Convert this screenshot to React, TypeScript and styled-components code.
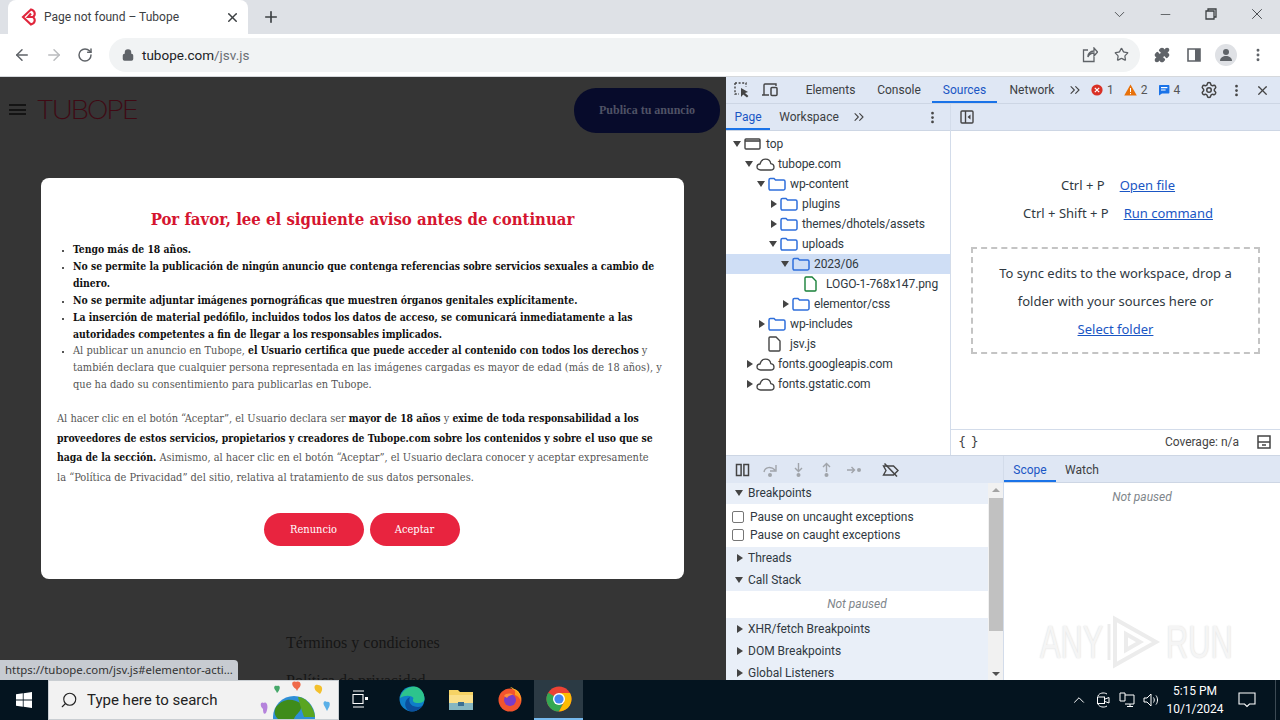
import React from "react";
import styled, { createGlobalStyle } from "styled-components";
import { ArrowLeft, ArrowRight, RotateCw, Lock, Star, Puzzle, X, Plus, ChevronDown, Minus, Settings, MoreVertical, ChevronsRight, ChevronUp, Search } from "lucide-react";

const Global = createGlobalStyle`
  html, body { margin: 0; padding: 0; width: 1280px; height: 720px; overflow: hidden; }
  body { font-family: Roboto, "Noto Sans", "Liberation Sans", sans-serif; }
  * { box-sizing: border-box; }
`;

const Screen = styled.div`
  width: 1280px;
  height: 720px;
  display: flex;
  flex-direction: column;
  overflow: hidden;
  background: #fff;
`;

/* browser chrome */
const TabStrip = styled.div`
  height: 34px;
  flex: none;
  background: #dee1e6;
  display: flex;
  align-items: center;
  padding-left: 8px;
  color: #3c4043;
`;
const Tab = styled.div`
  width: 240px;
  height: 34px;
  background: #fff;
  border-radius: 8px 8px 0 0;
  display: flex;
  align-items: center;
  padding: 0 8px 0 13px;
  font-size: 12px;
`;
const TabTitle = styled.span`
  flex: 1;
  margin-left: 7px;
  color: #3c4043;
`;
const NewTab = styled.div`
  margin-left: 14px;
  display: flex;
  color: #3c4043;
`;
const WindowButtons = styled.div`
  margin-left: auto;
  display: flex;
  align-items: center;
  padding-bottom: 6px;
  color: #3c4043;
`;
const WindowButton = styled.div`
  width: 46px;
  display: flex;
  justify-content: center;
`;
const Toolbar = styled.div`
  height: 43px;
  flex: none;
  background: #fff;
  border-bottom: 1px solid #d5d8dc;
  display: flex;
  align-items: center;
  padding: 0 0 0 13px;
  color: #5f6368;
`;
const NavIcons = styled.div`
  display: flex;
  align-items: center;
  gap: 14px;
  width: 96px;
  color: #5f6368;
`;
const Omnibox = styled.div`
  width: 1031px;
  height: 34px;
  margin-bottom: 1px;
  border-radius: 17px;
  background: #f1f3f4;
  display: flex;
  align-items: center;
  padding: 0 11px 0 13px;
  font-size: 13.5px;
`;
const Host = styled.span`
  color: #202124;
  margin-left: 8px;
`;
const UrlPath = styled.span`
  color: #6b6f74;
`;
const OmniRight = styled.div`
  margin-left: auto;
  display: flex;
  gap: 16px;
  align-items: center;
  color: #5f6368;
`;
const ToolbarRight = styled.div`
  display: flex;
  align-items: center;
  margin-left: 6px;
  color: #5f6368;
`;
const ToolSlot = styled.div`
  width: 32px;
  display: flex;
  align-items: center;
  justify-content: center;
`;
const Avatar = styled.div`
  width: 22px;
  height: 22px;
  border-radius: 50%;
  background: #dfe1e5;
  display: flex;
  align-items: center;
  justify-content: center;
`;

const Main = styled.div`
  flex: 1;
  display: flex;
  min-height: 0;
`;

/* page under the modal */
const Page = styled.div`
  position: relative;
  width: 726px;
  flex: none;
  background: #353535;
  overflow: hidden;
`;
const PageHeader = styled.div`
  display: flex;
  align-items: center;
  height: 65px;
  padding: 0 6px 0 9px;
`;
const Burger = styled.div`
  width: 17px;
  height: 11px;
  border-top: 2px solid #141414;
  border-bottom: 2px solid #141414;
  position: relative;
  &::after {
    content: "";
    display: block;
    height: 2px;
    margin-top: 2.5px;
    background: #141414;
  }
`;
const Logo = styled.div`
  margin-left: 10px;
  font-family: "Inter", sans-serif;
  font-weight: 200;
  font-size: 26px;
  letter-spacing: -2.2px;
  color: #3f0a14;
  transform: scaleX(1.12);
  transform-origin: left;
`;
const PublishButton = styled.div`
  margin-left: auto;
  margin-top: 1px;
  width: 146px;
  height: 45px;
  border-radius: 22px;
  background: #070b2b;
  color: #4f5265;
  font-family: "Liberation Serif", serif;
  font-weight: 700;
  font-size: 12px;
  display: flex;
  align-items: center;
  justify-content: center;
`;
const FooterLinks = styled.div`
  margin: 492px 0 0 286px;
  display: flex;
  flex-direction: column;
  gap: 20px;
  font-family: "Liberation Serif", serif;
  font-size: 16px;
  color: #161616;
`;
const Backdrop = styled.div`
  position: absolute;
  inset: 0;
  display: flex;
  align-items: center;
  justify-content: center;
`;
const Modal = styled.div`
  width: 643px;
  height: 401px;
  margin-right: 1px;
  background: #fff;
  border-radius: 8px;
  padding: 31px 16px 0 16px;
  font-family: "DejaVu Serif Condensed", "DejaVu Serif", "Liberation Serif", serif;
  font-size: 10.95px;
  color: #555;
  white-space: nowrap;
`;
const ModalTitle = styled.h2`
  margin: 0;
  text-align: center;
  font-size: 16.6px;
  line-height: 21px;
  font-weight: 700;
  color: #d5152f;
`;
const Rules = styled.ul`
  margin: 12px 0 0;
  padding: 0 0 0 16px;
  line-height: 16.9px;
  list-style: square;
  & li::marker { font-size: 7px; }
`;
const Note = styled.p`
  margin: 15px 0 0;
  line-height: 19.6px;
`;
const Strong = styled.b`
  color: #111;
  font-size: 10.35px;
  line-height: 1;
`;
const ModalActions = styled.div`
  display: flex;
  justify-content: center;
  gap: 6px;
  margin: 25px 0 0 -2px;
`;
const ModalButton = styled.div<{ $w: number }>`
  width: ${(p) => p.$w}px;
  height: 33px;
  border-radius: 17px;
  background: #e8243f;
  color: #fff;
  display: flex;
  align-items: center;
  justify-content: center;
  font-size: 11px;
`;
const StatusBubble = styled.div`
  position: absolute;
  left: 0;
  bottom: 0;
  width: 238px;
  height: 20px;
  background: #c7cbd1;
  border-radius: 0 4px 0 0;
  color: #333;
  font-family: "Noto Sans", sans-serif;
  font-size: 11.4px;
  line-height: 20px;
  padding-left: 5px;
  white-space: nowrap;
  overflow: hidden;
`;

/* devtools */
const DevTools = styled.div`
  position: relative;
  flex: 1;
  display: flex;
  flex-direction: column;
  min-width: 0;
  background: #fff;
  font-size: 12px;
  color: #303942;
`;
const Bar = styled.div`
  flex: none;
  height: 27px;
  background: #dfe7f4;
  display: flex;
  align-items: center;
  border-bottom: 1px solid #cdd6e4;
`;
const BarIcons = styled.div<{ $w?: number; $pad?: number }>`
  display: flex;
  align-items: center;
  gap: 10px;
  padding-left: ${(p) => p.$pad ?? 7}px;
  width: ${(p) => p.$w ?? 69}px;
  color: #444;
`;
const PanelTab = styled.div<{ $active?: boolean; $w: number }>`
  width: ${(p) => p.$w}px;
  height: 26px;
  padding-top: 1px;
  display: flex;
  align-items: center;
  justify-content: center;
  color: ${(p) => (p.$active ? "#1a56c4" : "#3c4043")};
  border-bottom: 2px solid ${(p) => (p.$active ? "#1a73e8" : "transparent")};
`;
const ScopeTab = styled(PanelTab)`
  padding-top: 3px;
`;
const MoreTabs = styled.div<{ $gap?: number }>`
  display: flex;
  margin-left: ${(p) => p.$gap ?? 0}px;
  color: #444;
`;
const Counts = styled.div`
  display: flex;
  align-items: center;
  gap: 4px;
  margin-left: 8px;
  color: #555;
`;
const CountGap = styled.span`
  margin-right: 6px;
`;
const BarRight = styled.div`
  margin-left: auto;
  display: flex;
  align-items: center;
  gap: 11px;
  padding-right: 10px;
  color: #444;
`;
const Upper = styled.div`
  flex: none;
  height: 352px;
  display: flex;
  border-bottom: 1px solid #cdd6e4;
`;
const Navigator = styled.div`
  width: 225px;
  flex: none;
  border-right: 1px solid #d3dcea;
  display: flex;
  flex-direction: column;
`;
const Tree = styled.div`
  padding-top: 3px;
  letter-spacing: -0.1px;
`;
const TreeRow = styled.div<{ $depth: number; $selected?: boolean }>`
  height: 20px;
  display: flex;
  align-items: center;
  padding-left: ${(p) => 7 + p.$depth * 12}px;
  background: ${(p) => (p.$selected ? "#cfdef5" : "transparent")};
  white-space: nowrap;
`;
const Caret = styled.span<{ $open?: boolean; $hidden?: boolean }>`
  width: 11px;
  flex: none;
  display: flex;
  visibility: ${(p) => (p.$hidden ? "hidden" : "visible")};
  &::before {
    content: "";
    display: block;
    ${(p) =>
      p.$open
        ? "border-left: 4.5px solid transparent; border-right: 4.5px solid transparent; border-top: 6px solid #444;"
        : "margin-left: 2px; border-top: 4.5px solid transparent; border-bottom: 4.5px solid transparent; border-left: 6px solid #444;"}
  }
`;
const RowIcon = styled.span`
  width: 22px;
  flex: none;
  display: flex;
`;
const Editor = styled.div`
  flex: 1;
  display: flex;
  flex-direction: column;
  min-width: 0;
`;
const EditorBody = styled.div`
  flex: 1;
  display: flex;
  flex-direction: column;
  padding: 40px 20px 0;
  font-family: "Noto Sans", sans-serif;
  font-size: 13px;
`;
const Shortcut = styled.div`
  display: flex;
  justify-content: center;
  gap: 15px;
  height: 28px;
  padding-left: 5px;
  align-items: center;
`;
const LinkText = styled.span`
  color: #1a56c4;
  text-decoration: underline;
`;
const DropZone = styled.div`
  margin-top: 20px;
  width: 289px;
  height: 107px;
  border: 2px dashed #c4c4c4;
  text-align: center;
  line-height: 28px;
  padding-top: 10px;
  display: flex;
  flex-direction: column;
`;
const CoverageBar = styled.div`
  height: 26px;
  flex: none;
  border-top: 1px solid #d3dcea;
  display: flex;
  align-items: center;
  justify-content: space-between;
  padding: 0 9px 2px 7px;
  font-size: 12px;
  color: #444;
`;
const FormatGlyph = styled.span`
  font-family: "DejaVu Sans", sans-serif;
  font-size: 13px;
`;
const CoverageRight = styled.div`
  display: flex;
  align-items: center;
  gap: 18px;
`;
const Lower = styled.div`
  flex: 1;
  display: flex;
  min-height: 0;
`;
const Debugger = styled.div`
  width: 278px;
  flex: none;
  display: flex;
  flex-direction: column;
  min-height: 0;
  border-right: 1px solid #d3dcea;
`;
const DebugBar = styled.div`
  height: 27px;
  flex: none;
  background: #dfe7f4;
  display: flex;
  align-items: center;
  padding-left: 8px;
  gap: 11px;
`;
const DebugSpacer = styled.span`
  width: 0;
  margin-left: -3px;
`;
const DebugBody = styled.div`
  flex: 1;
  display: flex;
  min-height: 0;
`;
const Sections = styled.div`
  flex: 1;
  min-width: 0;
  overflow: hidden;
`;
const SectionHead = styled.div`
  height: 22px;
  background: #e9eff8;
  display: flex;
  align-items: center;
  padding-left: 9px;
  gap: 2px;
  &:first-child { margin-top: -1px; }
`;
const CheckRow = styled.label`
  height: 18px;
  display: flex;
  align-items: center;
  padding-left: 6px;
  gap: 6px;
`;
const CheckBox = styled.span`
  width: 12px;
  height: 12px;
  border: 1px solid #767676;
  border-radius: 2px;
  background: #fff;
`;
const CheckList = styled.div`
  padding-top: 4px;
  height: 43px;
`;
const NotPaused = styled.div`
  height: 27px;
  padding-bottom: 2px;
  display: flex;
  align-items: center;
  justify-content: center;
  font-style: italic;
  color: #80868b;
`;
const ScrollTrack = styled.div`
  width: 15px;
  flex: none;
  background: #f1f1f1;
  display: flex;
  flex-direction: column;
  align-items: center;
  justify-content: space-between;
  padding: 5px 0 4px;
`;
const ScrollThumb = styled.div`
  width: 14px;
  height: 133px;
  margin-top: 6px;
  margin-bottom: auto;
  background: #c1c1c1;
`;
const ScrollUp = styled.span`
  border-left: 4px solid transparent;
  border-right: 4px solid transparent;
  border-bottom: 4px solid #a3a3a3;
`;
const ScrollDown = styled.span`
  border-left: 4px solid transparent;
  border-right: 4px solid transparent;
  border-top: 4px solid #505050;
`;
const ScopePane = styled.div`
  flex: 1;
  min-width: 0;
  display: flex;
  flex-direction: column;
`;
const ScopeText = styled.div`
  text-align: center;
  font-style: italic;
  color: #80868b;
  padding-top: 7px;
`;
const Watermark = styled.div`
  position: absolute;
  right: 52px;
  bottom: 8px;
  display: flex;
  align-items: center;
  gap: 4px;
  pointer-events: none;
`;
const WatermarkWord = styled.span`
  display: inline-block;
  width: 62px;
  font-family: "Liberation Sans", sans-serif;
  font-size: 46px;
  color: #f5f5f5;
  text-shadow: 0 0 2px #d8d8d8;
  white-space: nowrap;
  transform: scaleX(0.67);
  transform-origin: left;
`;

/* taskbar */
const Taskbar = styled.div`
  height: 40px;
  flex: none;
  background: #04141f;
  display: flex;
  align-items: center;
  color: #fff;
`;
const StartButton = styled.div`
  width: 48px;
  display: flex;
  justify-content: center;
`;
const SearchBox = styled.div`
  width: 291px;
  height: 40px;
  background: #f2f2f2;
  border: 1px solid #c9ced2;
  display: flex;
  align-items: center;
  padding-left: 11px;
  gap: 9px;
  color: #222;
  font-size: 15px;
`;
const SearchGlass = styled.span`
  display: flex;
  transform: scaleX(-1);
`;
const SearchArt = styled.span`
  margin-left: auto;
  display: flex;
  height: 38px;
`;
const TaskIcon = styled.div<{ $active?: boolean; $w?: number }>`
  width: ${(p) => p.$w ?? 49}px;
  height: 40px;
  display: flex;
  align-items: center;
  justify-content: center;
  background: ${(p) => (p.$active ? "#2b3a44" : "transparent")};
  border-bottom: 2px solid ${(p) => (p.$active ? "#76b9ed" : "transparent")};
`;
const TaskGroup = styled.div`
  display: flex;
  margin-left: 6px;
`;
const Tray = styled.div`
  margin-left: auto;
  display: flex;
  align-items: center;
  height: 40px;
`;
const TraySlot = styled.div<{ $w?: number }>`
  width: ${(p) => p.$w ?? 24}px;
  display: flex;
  justify-content: center;
`;
const Clock = styled.div`
  width: 64px;
  text-align: center;
  font-size: 12px;
  line-height: 18px;
  white-space: nowrap;
`;
const DesktopEdge = styled.div`
  width: 1px;
  height: 40px;
  margin: 0 4px 0 8px;
  background: #3c4a54;
`;

const sw = { fill: "none", stroke: "currentColor", strokeWidth: 1.3 };

function Favicon() {
  return (
    <svg width="16" height="18" viewBox="0 0 16 18">
      <path d="M10 1.5 L2 9 L10 16.5 C14 15.5 15 11.5 12 9 C15 6.5 14 2.5 10 1.5 Z M10 5.5 L7 9 L12 9" fill="none" stroke="#e0263c" strokeWidth="2.1" />
    </svg>
  );
}
function FolderIcon({ light }: { light?: boolean }) {
  return (
    <svg width="18" height="14" viewBox="0 0 18 14">
      <path d="M1 3 C1 2 1.6 1.5 2.4 1.5 H6 L7.5 3 H15.6 C16.4 3 17 3.6 17 4.4 V11.6 C17 12.4 16.4 13 15.6 13 H2.4 C1.6 13 1 12.4 1 11.6 Z" fill={light ? "#cfdef5" : "#fff"} stroke="#2f6fdb" strokeWidth="1.5" />
    </svg>
  );
}
function CloudIcon() {
  return (
    <svg width="19" height="13" viewBox="0 0 19 13">
      <path d="M4.6 12 C2.4 12 1 10.6 1 8.9 C1 7.2 2.4 6 4 6 C4.6 3.2 6.8 1.2 9.6 1.2 C12.4 1.2 14.4 3.2 14.8 5.6 C16.6 5.8 18 7 18 8.9 C18 10.6 16.6 12 14.6 12 Z" {...sw} stroke="#444" />
    </svg>
  );
}
function FileIcon({ color = "#444" }: { color?: string }) {
  return (
    <svg width="13" height="16" viewBox="0 0 13 16">
      <path d="M2 1 H8 L12 5 V14 C12 14.6 11.6 15 11 15 H2 C1.4 15 1 14.6 1 14 V2 C1 1.4 1.4 1 2 1 Z" fill="#fff" stroke={color} strokeWidth="1.4" />
    </svg>
  );
}
function FrameIcon() {
  return (
    <svg width="17" height="12" viewBox="0 0 17 12">
      <rect x="1" y="1" width="15" height="10" rx="1" fill="none" stroke="#444" strokeWidth="1.4" />
      <path d="M1 3 H16" stroke="#444" strokeWidth="1.6" />
    </svg>
  );
}
function InspectIcon() {
  return (
    <svg width="18" height="18" viewBox="0 0 18 18">
      <path d="M2 2 H13 V6 M2 2 V13 H6" fill="none" stroke="#444" strokeWidth="1.4" strokeDasharray="2 1.6" />
      <path d="M8 7 L8 16 L10.2 13.6 L14 16.6 L15.4 15 L12 12 L15 11 Z" fill="#444" />
    </svg>
  );
}
function DeviceIcon() {
  return (
    <svg width="18" height="14" viewBox="0 0 18 14">
      <path d="M1 12 H8 M3 12 V2 C3 1.4 3.4 1 4 1 H15 V3" fill="none" stroke="#444" strokeWidth="1.4" />
      <rect x="10" y="4.5" width="6" height="8" rx="1" fill="none" stroke="#444" strokeWidth="1.5" />
    </svg>
  );
}
function SidebarToggle() {
  return (
    <svg width="14" height="14" viewBox="0 0 14 14">
      <rect x="1" y="1" width="12" height="12" rx="1" fill="none" stroke="#444" strokeWidth="1.4" />
      <path d="M5.5 1 V13" stroke="#444" strokeWidth="1.4" />
      <path d="M10.5 4.5 L7.5 7 L10.5 9.5 Z" fill="#444" />
    </svg>
  );
}
function ErrorBadge() {
  return (
    <svg width="12" height="12" viewBox="0 0 12 12">
      <circle cx="6" cy="6" r="5.6" fill="#d93025" />
      <path d="M3.8 3.8 L8.2 8.2 M8.2 3.8 L3.8 8.2" stroke="#fff" strokeWidth="1.2" />
    </svg>
  );
}
function WarnBadge() {
  return (
    <svg width="13" height="12" viewBox="0 0 13 12">
      <path d="M6.5 0.5 L12.8 11.5 H0.2 Z" fill="#e8710a" />
      <path d="M6.5 4 V8 M6.5 9 V10.2" stroke="#fff" strokeWidth="1" />
    </svg>
  );
}
function InfoBadge() {
  return (
    <svg width="12" height="12" viewBox="0 0 12 12">
      <path d="M1 2 C1 1.4 1.4 1 2 1 H10.5 C11 1 11.4 1.4 11.4 2 V8.6 C11.4 9.2 11 9.6 10.5 9.6 H4 L1 11.4 Z" fill="#1a73e8" />
      <path d="M3 3.6 H9.4 M3 6 H7.6" stroke="#fff" strokeWidth="1.1" />
    </svg>
  );
}
function DebugIcon({ d, dots, dim }: { d: string; dots: [number, number][]; dim?: boolean }) {
  const color = dim ? "#a0a4aa" : "#444";
  return (
    <svg width="17" height="16" viewBox="0 0 17 16">
      <path d={d} fill="none" stroke={color} strokeWidth="1.4" />
      {dots.map(([x, y]) => (
        <circle key={x + "-" + y} cx={x} cy={y} r="2" fill={color} />
      ))}
    </svg>
  );
}
function PauseIcon() {
  return (
    <svg width="17" height="14" viewBox="-1.5 0 17 14">
      <rect x="1" y="1.5" width="4.6" height="11" fill="none" stroke="#444" strokeWidth="1.5" />
      <rect x="8.4" y="1.5" width="4.6" height="11" fill="none" stroke="#444" strokeWidth="1.5" />
    </svg>
  );
}
function DeactivateIcon() {
  return (
    <svg width="18" height="14" viewBox="0 0 18 14">
      <path d="M1.5 3 H11.5 L16 7.5 L11.5 12 H1.5 L4 7.5 Z" fill="none" stroke="#444" strokeWidth="1.4" />
      <path d="M2.5 0.5 L15 13.5" stroke="#444" strokeWidth="1.5" />
    </svg>
  );
}
function WindowsLogo() {
  return (
    <svg width="16" height="16" viewBox="0 0 16 16">
      <path d="M0 2.3 L6.8 1.3 V7.5 H0 Z M7.6 1.2 L16 0 V7.5 H7.6 Z M0 8.4 H6.8 V14.7 L0 13.7 Z M7.6 8.4 H16 V16 L7.6 14.8 Z" fill="#fff" />
    </svg>
  );
}
function EarthArt() {
  return (
    <svg width="80" height="38" viewBox="0 0 80 38">
      <circle cx="36" cy="36" r="21" fill="#2f8fd8" />
      <path d="M18 26 C26 16 36 18 42 22 C46 30 38 32 36 38 H20 C16 34 16 30 18 26 Z" fill="#3f8c1a" />
      <path d="M40 16 C48 16 56 26 57 36 H46 C44 30 42 24 40 16 Z" fill="#5aa521" />
      <path d="M5 28 C1 24 3 20 6 22 C9 20 11 26 8 32 C6 34 5 32 5 28 Z" fill="#b583dc" />
      <path d="M18 10 C15 7 16 4 19 5 C22 4 23 7 20 11 L19 12 Z" fill="#46a86a" />
      <path d="M38 8 C32 4 34 -1 38 1 C42 -1 45 4 40 8 L39 10 Z" fill="#ef6a4a" />
      <path d="M58 10 C55 6 57 3 60 4 C64 4 66 8 62 13 Z" fill="#f3c02c" />
      <path d="M67 26 C64 22 66 19 69 21 C72 20 73 24 70 28 L69 30 Z" fill="#5ab0e8" />
    </svg>
  );
}
function EdgeLogo() {
  return (
    <svg width="26" height="26" viewBox="0 0 26 26">
      <circle cx="13" cy="13" r="12.5" fill="#0f7fc9" />
      <path d="M1 12 C3 4 10 0.5 15 0.6 C21 1 25.5 6 25.5 13 C25.5 16 22 17.5 17.5 17 C14.5 16.6 13 15 14.5 12 C12 9 6 9 1 12 Z" fill="#2dc48d" />
      <path d="M10 24.8 C5 22 4.5 14 11 11 C9 15 11 21 19 21 C21 21 23 20 24 19 C21 24 15 26.5 10 24.8 Z" fill="#0b4f9e" />
    </svg>
  );
}
function ExplorerLogo() {
  return (
    <svg width="26" height="24" viewBox="0 0 26 24">
      <path d="M1 3 H10 L12 5 H25 V23 H1 Z" fill="#f6d365" />
      <path d="M1 8 H25 V23 H1 Z" fill="#fbe08a" />
      <rect x="1" y="16" width="24" height="7" fill="#5fa8d3" opacity="0.75" />
      <rect x="10" y="15" width="6" height="4" fill="#3b6f93" />
    </svg>
  );
}
function FirefoxLogo() {
  return (
    <svg width="26" height="26" viewBox="0 0 26 26">
      <circle cx="13" cy="14" r="11.5" fill="#f2542d" />
      <path d="M13 1 C17 4 21 6 23.5 13 C24 9 22 4 17 3 C16 2 15 1 13 1 Z" fill="#ffbd2e" />
      <path d="M18 4 C22 7 24.5 11 24 16 C23 12 21 10 18 9 Z" fill="#ff9a1f" />
      <circle cx="13" cy="14" r="6" fill="#7a3cc8" />
      <path d="M7 10 C9 7 14 7 16 9 C13 9 11 10 10 12 Z" fill="#ff8c3a" />
    </svg>
  );
}
function ChromeLogo() {
  return (
    <svg width="26" height="26" viewBox="0 0 26 26">
      <circle cx="13" cy="13" r="12.5" fill="#ea4335" />
      <path d="M13 13 L2.2 6.7 A12.5 12.5 0 0 0 13 25.5 L19 13 Z" fill="#34a853" />
      <path d="M13 7 H24 A12.5 12.5 0 0 1 13 25.5 L18.2 16 Z" fill="#fbbc04" />
      <circle cx="13" cy="13" r="6" fill="#fff" />
      <circle cx="13" cy="13" r="4.6" fill="#4285f4" />
    </svg>
  );
}
function WatermarkPlay() {
  return (
    <svg width="56" height="60" viewBox="0 0 56 60">
      <path d="M9 7 V53 L50 30 Z M20 22 V38 L34 30 Z" fill="none" stroke="#ececec" strokeWidth="4" />
      <path d="M3 12 V48" fill="none" stroke="#ececec" strokeWidth="3" />
    </svg>
  );
}

const tree = [
  { d: 0, open: true, icon: <FrameIcon />, label: "top" },
  { d: 1, open: true, icon: <CloudIcon />, label: "tubope.com" },
  { d: 2, open: true, icon: <FolderIcon />, label: "wp-content" },
  { d: 3, open: false, icon: <FolderIcon />, label: "plugins" },
  { d: 3, open: false, icon: <FolderIcon />, label: "themes/dhotels/assets" },
  { d: 3, open: true, icon: <FolderIcon />, label: "uploads" },
  { d: 4, open: true, icon: <FolderIcon light />, label: "2023/06", selected: true },
  { d: 5, leaf: true, icon: <FileIcon color="#188038" />, label: "LOGO-1-768x147.png" },
  { d: 4, open: false, icon: <FolderIcon />, label: "elementor/css" },
  { d: 2, open: false, icon: <FolderIcon />, label: "wp-includes" },
  { d: 2, leaf: true, icon: <FileIcon />, label: "jsv.js" },
  { d: 1, open: false, icon: <CloudIcon />, label: "fonts.googleapis.com" },
  { d: 1, open: false, icon: <CloudIcon />, label: "fonts.gstatic.com" },
];

export default function App() {
  return (
    <Screen>
      <Global />
      <TabStrip>
        <Tab>
          <Favicon />
          <TabTitle>Page not found – Tubope</TabTitle>
          <X size={15} strokeWidth={2.4} />
        </Tab>
        <NewTab>
          <Plus size={18} strokeWidth={2.2} />
        </NewTab>
        <WindowButtons>
          <WindowButton><ChevronDown size={17} strokeWidth={1.2} /></WindowButton>
          <WindowButton><Minus size={15} strokeWidth={1.2} /></WindowButton>
          <WindowButton>
            <svg width="12" height="12" viewBox="0 0 12 12">
              <path d="M3 3 V1 H11 V9 H9 M1 3 H9 V11 H1 Z" {...sw} />
            </svg>
          </WindowButton>
          <WindowButton><X size={18} strokeWidth={1.2} /></WindowButton>
        </WindowButtons>
      </TabStrip>
      <Toolbar>
        <NavIcons>
          <ArrowLeft size={18} strokeWidth={2} />
          <ArrowRight size={18} strokeWidth={2} color="#babcbe" />
          <RotateCw size={16} strokeWidth={2.2} />
        </NavIcons>
        <Omnibox>
          <Lock size={12} strokeWidth={3} fill="#5f6368" />
          <Host>
            tubope.com<UrlPath>/jsv.js</UrlPath>
          </Host>
          <OmniRight>
            <svg width="16" height="16" viewBox="0 0 16 16">
              <path d="M6 3 H1.5 V14.5 H12 V10 M6 10 C7 7 10 6 12 6 V9 L15.5 5 L12 1 V4 C8 4 5.5 7 6 10 Z" {...sw} />
            </svg>
            <Star size={15} strokeWidth={2} />
          </OmniRight>
        </Omnibox>
        <ToolbarRight>
          <ToolSlot><Puzzle size={16} strokeWidth={2} fill="#5f6368" /></ToolSlot>
          <ToolSlot>
            <svg width="14" height="14" viewBox="0 0 14 14">
              <path d="M1 1 H13 V13 H1 Z" fill="none" stroke="#5f6368" strokeWidth="1.6" />
              <rect x="8" y="1" width="5" height="12" fill="#5f6368" />
            </svg>
          </ToolSlot>
          <ToolSlot>
            <Avatar>
              <svg width="14" height="14" viewBox="0 0 14 14">
                <circle cx="7" cy="4" r="3" fill="#5f6368" />
                <path d="M1 13 C1 9.5 4 8 7 8 C10 8 13 9.5 13 13 Z" fill="#5f6368" />
              </svg>
            </Avatar>
          </ToolSlot>
          <ToolSlot><MoreVertical size={16} strokeWidth={2.4} /></ToolSlot>
        </ToolbarRight>
      </Toolbar>

      <Main>
        <Page>
          <PageHeader>
            <Burger />
            <Logo>TUBOPE</Logo>
            <PublishButton>Publica tu anuncio</PublishButton>
          </PageHeader>
          <FooterLinks>
            <span>Términos y condiciones</span>
            <span>Política de privacidad</span>
          </FooterLinks>
          <Backdrop>
            <Modal>
              <ModalTitle>Por favor, lee el siguiente aviso antes de continuar</ModalTitle>
              <Rules>
                <li><Strong>Tengo más de 18 años.</Strong></li>
                <li><Strong>No se permite la publicación de ningún anuncio que contenga referencias sobre servicios sexuales a cambio de<br />dinero.</Strong></li>
                <li><Strong>No se permite adjuntar imágenes pornográficas que muestren órganos genitales explícitamente.</Strong></li>
                <li><Strong>La inserción de material pedófilo, incluidos todos los datos de acceso, se comunicará inmediatamente a las<br />autoridades competentes a fin de llegar a los responsables implicados.</Strong></li>
                <li>Al publicar un anuncio en Tubope, <Strong>el Usuario certifica que puede acceder al contenido con todos los derechos</Strong> y<br />también declara que cualquier persona representada en las imágenes cargadas es mayor de edad (más de 18 años), y<br />que ha dado su consentimiento para publicarlas en Tubope.</li>
              </Rules>
              <Note>
                Al hacer clic en el botón “Aceptar”, el Usuario declara ser <Strong>mayor de 18 años</Strong> y <Strong>exime de toda responsabilidad a los<br />proveedores de estos servicios, propietarios y creadores de Tubope.com sobre los contenidos y sobre el uso que se<br />haga de la sección.</Strong> Asimismo, al hacer clic en el botón “Aceptar”, el Usuario declara conocer y aceptar expresamente<br />la “Política de Privacidad” del sitio, relativa al tratamiento de sus datos personales.
              </Note>
              <ModalActions>
                <ModalButton $w={100}>Renuncio</ModalButton>
                <ModalButton $w={90}>Aceptar</ModalButton>
              </ModalActions>
            </Modal>
          </Backdrop>
          <StatusBubble>https://tubope.com/jsv.js#elementor-acti...</StatusBubble>
        </Page>

        <DevTools>
          <Bar>
            <BarIcons>
              <InspectIcon />
              <DeviceIcon />
            </BarIcons>
            <PanelTab $w={71}>Elements</PanelTab>
            <PanelTab $w={66}>Console</PanelTab>
            <PanelTab $w={65} $active>Sources</PanelTab>
            <PanelTab $w={70}>Network</PanelTab>
            <MoreTabs><ChevronsRight size={16} strokeWidth={1.6} /></MoreTabs>
            <Counts>
              <ErrorBadge /><CountGap>1</CountGap>
              <WarnBadge /><CountGap>2</CountGap>
              <InfoBadge /><CountGap>4</CountGap>
            </Counts>
            <BarRight>
              <Settings size={18} strokeWidth={2} />
              <MoreVertical size={15} strokeWidth={2.4} />
              <X size={15} strokeWidth={2} />
            </BarRight>
          </Bar>
          <Upper>
            <Navigator>
              <Bar>
                <PanelTab $w={44} $active>Page</PanelTab>
                <PanelTab $w={78}>Workspace</PanelTab>
                <MoreTabs $gap={3}><ChevronsRight size={16} strokeWidth={1.6} /></MoreTabs>
                <BarRight>
                  <MoreVertical size={15} strokeWidth={2.4} />
                </BarRight>
              </Bar>
              <Tree>
                {tree.map((n) => (
                  <TreeRow key={n.label} $depth={n.d} $selected={n.selected}>
                    <Caret $open={n.open} $hidden={n.leaf} />
                    <RowIcon>{n.icon}</RowIcon>
                    {n.label}
                  </TreeRow>
                ))}
              </Tree>
            </Navigator>
            <Editor>
              <Bar>
                <BarIcons $pad={9}>
                  <SidebarToggle />
                </BarIcons>
              </Bar>
              <EditorBody>
                <Shortcut>
                  <span>Ctrl + P</span>
                  <LinkText>Open file</LinkText>
                </Shortcut>
                <Shortcut>
                  <span>Ctrl + Shift + P</span>
                  <LinkText>Run command</LinkText>
                </Shortcut>
                <DropZone>
                  <span>To sync edits to the workspace, drop a</span>
                  <span>folder with your sources here or</span>
                  <span><LinkText>Select folder</LinkText></span>
                </DropZone>
              </EditorBody>
              <CoverageBar>
                <FormatGlyph>{"{ }"}</FormatGlyph>
                <CoverageRight>
                  Coverage: n/a
                  <svg width="14" height="14" viewBox="0 0 14 14">
                    <path d="M1 1 H13 V13 H1 Z M1 7 H13 M5 10 H9" fill="none" stroke="#444" strokeWidth="1.5" />
                  </svg>
                </CoverageRight>
              </CoverageBar>
            </Editor>
          </Upper>
          <Lower>
            <Debugger>
              <DebugBar>
                <PauseIcon />
                <DebugIcon dim d="M2 10 C3 5 9 4 13 8 M14 3 V9 H8" dots={[[8, 13]]} />
                <DebugIcon dim d="M8.5 1 V9 M5 6 L8.5 9.5 L12 6" dots={[[8.5, 13]]} />
                <DebugIcon dim d="M8.5 10 V2 M5 5 L8.5 1.5 L12 5" dots={[[8.5, 13]]} />
                <DebugIcon dim d="M1 8 H8 M5.5 5 L8.5 8 L5.5 11" dots={[[13, 8]]} />
                <DebugSpacer />
                <DeactivateIcon />
              </DebugBar>
              <DebugBody>
                <Sections>
                  <SectionHead><Caret $open />Breakpoints</SectionHead>
                  <CheckList>
                    <CheckRow><CheckBox />Pause on uncaught exceptions</CheckRow>
                    <CheckRow><CheckBox />Pause on caught exceptions</CheckRow>
                  </CheckList>
                  <SectionHead><Caret />Threads</SectionHead>
                  <SectionHead><Caret $open />Call Stack</SectionHead>
                  <NotPaused>Not paused</NotPaused>
                  <SectionHead><Caret />XHR/fetch Breakpoints</SectionHead>
                  <SectionHead><Caret />DOM Breakpoints</SectionHead>
                  <SectionHead><Caret />Global Listeners</SectionHead>
                </Sections>
                <ScrollTrack>
                  <ScrollUp />
                  <ScrollThumb />
                  <ScrollDown />
                </ScrollTrack>
              </DebugBody>
            </Debugger>
            <ScopePane>
              <Bar>
                <ScopeTab $w={52} $active>Scope</ScopeTab>
                <ScopeTab $w={52}>Watch</ScopeTab>
              </Bar>
              <ScopeText>Not paused</ScopeText>
            </ScopePane>
          </Lower>
          <Watermark>
            <WatermarkWord>ANY</WatermarkWord>
            <WatermarkPlay />
            <WatermarkWord>RUN</WatermarkWord>
          </Watermark>
        </DevTools>
      </Main>

      <Taskbar>
        <StartButton><WindowsLogo /></StartButton>
        <SearchBox>
          <SearchGlass><Search size={18} strokeWidth={1.5} /></SearchGlass>
          Type here to search
          <SearchArt><EarthArt /></SearchArt>
        </SearchBox>
        <TaskIcon $w={42}>
          <svg width="16" height="18" viewBox="0 0 16 18">
            <path d="M1 1 H12 M1 17 H12 M1 4.5 H11 V13.5 H1 Z" fill="none" stroke="#fff" strokeWidth="1.1" />
            <rect x="13" y="7" width="3" height="3" fill="#fff" />
          </svg>
        </TaskIcon>
        <TaskGroup>
          <TaskIcon><EdgeLogo /></TaskIcon>
          <TaskIcon><ExplorerLogo /></TaskIcon>
          <TaskIcon><FirefoxLogo /></TaskIcon>
          <TaskIcon $active><ChromeLogo /></TaskIcon>
        </TaskGroup>
        <Tray>
          <TraySlot><ChevronUp size={18} strokeWidth={1.3} /></TraySlot>
          <TraySlot>
            <svg width="14" height="18" viewBox="0 0 14 18">
              <path d="M2 5 C3 2 8 1 11 3 M2 13 C3 16 8 17 11 15" fill="none" stroke="#fff" />
              <rect x="1.5" y="6" width="7" height="6.5" fill="none" stroke="#fff" />
              <path d="M9 8 L13 6.5 V12 L9 10.5" fill="none" stroke="#fff" />
            </svg>
          </TraySlot>
          <TraySlot>
            <svg width="16" height="16" viewBox="0 0 16 16">
              <path d="M1 1 H6 V9 H1 Z M6 3 H15 V12 H6 M8 14.5 H14 M11 12 V14.5" fill="none" stroke="#fff" />
            </svg>
          </TraySlot>
          <TraySlot>
            <svg width="17" height="16" viewBox="0 0 17 16">
              <path d="M1 6 H4 L8 2 V14 L4 10 H1 Z M10.5 5.5 C11.5 7 11.5 9 10.5 10.5 M13 3.5 C15 6 15 10 13 12.5" fill="none" stroke="#fff" />
            </svg>
          </TraySlot>
          <Clock>5:15 PM<br />10/1/2024</Clock>
          <TraySlot $w={40}>
            <svg width="18" height="16" viewBox="0 0 18 16">
              <path d="M1 1 H17 V12 H11.5 L9 14.5 L6.5 12 H1 Z" fill="none" stroke="#fff" strokeWidth="1.1" />
            </svg>
          </TraySlot>
          <DesktopEdge />
        </Tray>
      </Taskbar>
    </Screen>
  );
}
